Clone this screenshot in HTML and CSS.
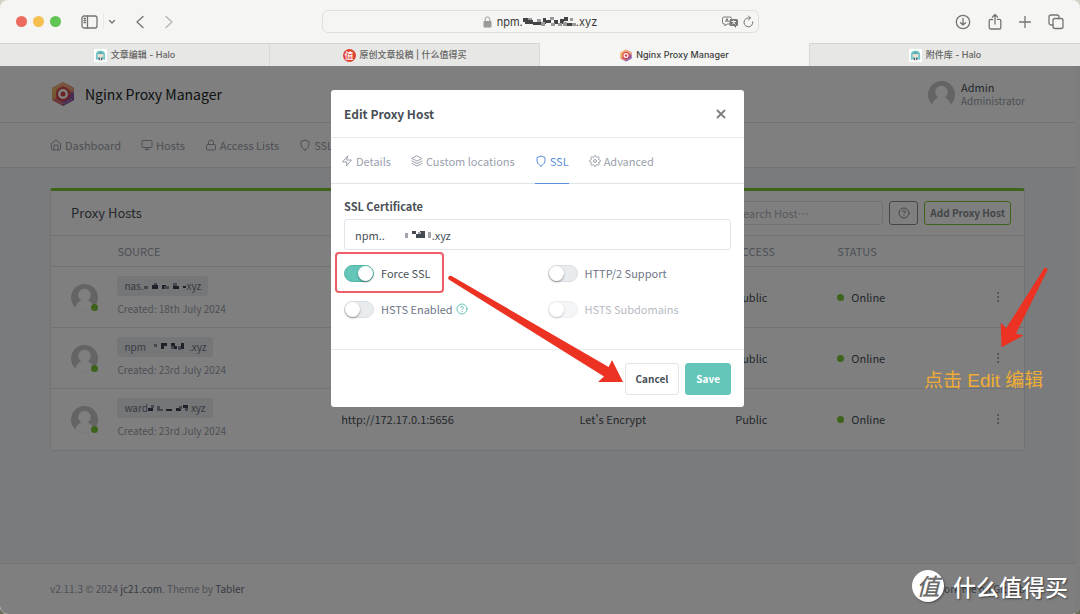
FILE: index.html
```html
<!DOCTYPE html>
<html lang="zh-CN">
<head>
<meta charset="utf-8">
<title>Nginx Proxy Manager</title>
<link rel="stylesheet" href="styles.css">
</head>
<body>
<svg class="defs" width="0" height="0" aria-hidden="true">
  <defs>
    <linearGradient id="npm" x1="0" y1="0" x2="1" y2="1">
      <stop offset="0" stop-color="#f5b955"/><stop offset=".45" stop-color="#e0605c"/><stop offset="1" stop-color="#7a54a8"/>
    </linearGradient>
    <symbol id="logo" viewBox="0 0 24 26">
      <path d="M12 1 23 7v12l-11 6L1 19V7z" fill="url(#npm)"/>
      <path d="M12 1 23 7v6L12 5 1 12V7z" fill="#f0b070" opacity=".7"/>
      <path d="M23 10v9l-11 6v-4z" fill="#7b52b5" opacity=".6"/>
      <path d="M1 7l4 2v8l-4 2z" fill="#f2d070" opacity=".6"/>
      <path d="M3 8l9-5 9 5M3 18l9 5 9-5" fill="none" stroke="#fff" stroke-width=".7" opacity=".5"/>
      <circle cx="12" cy="13" r="7" fill="#d8434a"/>
      <circle cx="12" cy="13" r="5" fill="#fff"/>
      <circle cx="12" cy="13" r="2.500" fill="#d8434a"/>
    </symbol>
    <symbol id="girl" viewBox="0 0 14 14">
      <rect width="14" height="14" fill="#fff"/>
      <path d="M2 12V6a5 4.500 0 0 1 10 0v6l-2-1H4z" fill="#79c9cb"/>
      <rect x="4" y="5" width="6" height="4" rx="1.500" fill="#f2ddd0"/>
      <path d="M3.500 5.500 5 3.500h4l1.500 2-2-.6-1.500.8-1.500-.8z" fill="#4fa3a8"/>
      <path d="M5 9.500h4v2.500H5z" fill="#54636a"/><path d="M6.500 9h1v3h-1z" fill="#e8e8e8"/>
    </symbol>
    <symbol id="user" viewBox="0 0 28 28">
      <circle cx="14" cy="14" r="14" fill="#c8c8c8"/>
      <circle cx="14" cy="11.500" r="6.500" fill="#fff"/>
      <path d="M4.500 24.300C6 19 9.500 16.500 14 16.500s8 2.500 9.500 7.800A14 14 0 0 1 14 28a14 14 0 0 1-9.500-3.700z" fill="#fff"/>
    </symbol>
    <symbol id="shield" viewBox="0 0 24 24"><path d="M12 22s8-4 8-10V5l-8-3-8 3v7c0 6 8 10 8 10z"/></symbol>
    <symbol id="help" viewBox="0 0 24 24"><circle cx="12" cy="12" r="10"/><path d="M9.090 9a3 3 0 0 1 5.830 1c0 2-3 3-3 3M12 17h.01"/></symbol>
    <symbol id="dots" viewBox="0 0 24 24"><circle cx="12" cy="12" r="1"/><circle cx="12" cy="4" r="1"/><circle cx="12" cy="20" r="1"/></symbol>
  </defs>
</svg>

<div class="window">
  <header class="toolbar">
    <div class="tools-left">
      <div class="lights"><i class="red"></i><i class="yellow"></i><i class="green"></i></div>
      <button class="tool" aria-label="Sidebar"><svg width="17" height="14" viewBox="0 0 17 14" class="line"><rect x="1" y="1" width="15" height="12" rx="2"/><path d="M6.500 1v12M3 3.500h1.500M3 5.500h1.500M3 7.500h1.500"/></svg></button>
      <button class="tool small" aria-label="Tab groups"><svg width="8" height="6" viewBox="0 0 8 6" class="line"><path d="m1.500 1.500 2.500 2.500 2.500-2.500"/></svg></button>
      <button class="tool back" aria-label="Back"><svg width="10" height="14" viewBox="0 0 10 14" class="line"><path d="M8 1.500 2 7l6 5.500"/></svg></button>
      <button class="tool forward" aria-label="Forward"><svg width="10" height="14" viewBox="0 0 10 14" class="line"><path d="m2 1.500 6 5.500-6 5.500"/></svg></button>
    </div>
    <div class="address">
      <div class="url">
        <svg width="9" height="12" viewBox="0 0 9 12"><rect x="0.500" y="5" width="8" height="6.500" rx="1" fill="#9a9a99"/><path d="M2.200 5V3.200a2.300 2.300 0 0 1 4.600 0V5" fill="none" stroke="#9a9a99"/></svg>
        <span class="host">npm.<svg width="53" height="10" viewBox="0 0 53 10"><path d="M0 1h5v4H0zM2 3h8v4H2zM10 5h12v3H10zM20 1h3v6h-3zM23 3h5v3h-5zM31 3h4v4h-4zM37 2h4v5h-4zM41 0h4v4h-4zM44 6h5v3h-5z" fill="#444"/><path d="M5 1h4v2H5zM14 2h4v3h-4zM18 5h4v4h-4zM27 0h4v3h-4zM28 6h4v3h-4zM35 6h4v3h-4zM40 5h4v4h-4zM47 1h3v3h-3zM49 6h4v3h-4z" fill="#999"/></svg>.xyz</span>
      </div>
      <div class="url-tools">
        <svg width="17" height="12" viewBox="0 0 17 12"><path d="M2 1h6a1.500 1.500 0 0 1 1.500 1.500v4A1.500 1.500 0 0 1 8 8H5L3 10V8H2A1.500 1.500 0 0 1 .5 6.500v-4A1.500 1.500 0 0 1 2 1zM3.500 6 5 2.500 6.500 6M4 5h2" fill="none" stroke="#7b7b7a"/><path d="M9 3h5.500A1.500 1.500 0 0 1 16 4.500v4a1.500 1.500 0 0 1-1.500 1.500H14v2l-2-2H9a1.500 1.500 0 0 1-1.500-1.500v-4A1.500 1.500 0 0 1 9 3z" fill="#777776"/><path d="M9.500 5.500h4.500M11.700 4.300v1.200M10 8.500l3-3M13.500 8.500l-3-3" fill="none" stroke="#eee"/></svg>
        <svg width="11" height="13" viewBox="0 0 11 13" class="line thin"><path d="M9.800 6.800A4.400 4.400 0 1 1 5.500 3h1.800M5.500 1l2 2-2 2"/></svg>
      </div>
    </div>
    <div class="tools-right">
      <button class="tool" aria-label="Downloads"><svg width="16" height="16" viewBox="0 0 16 16" class="line"><circle cx="8" cy="8" r="6.700"/><path d="M8 4.500V11M5.500 8.700 8 11l2.500-2.300"/></svg></button>
      <button class="tool" aria-label="Share"><svg width="14" height="18" viewBox="0 0 14 18" class="line"><path d="M4.500 6.500h-2a1.300 1.300 0 0 0-1.300 1.300v7A1.300 1.300 0 0 0 2.500 16h9a1.300 1.300 0 0 0 1.300-1.300v-7a1.300 1.300 0 0 0-1.300-1.300h-2M7 11V1.500M4.500 4 7 1.500 9.500 4"/></svg></button>
      <button class="tool" aria-label="New tab"><svg width="12" height="12" viewBox="0 0 12 12" class="line"><path d="M6 .5v11M.5 6h11"/></svg></button>
      <button class="tool" aria-label="Tab overview"><svg width="16" height="16" viewBox="0 0 16 16" class="line"><rect x="5" y="4.500" width="10" height="10" rx="2"/><path d="M5 11H3a2 2 0 0 1-2-2V3a2 2 0 0 1 2-2h6a2 2 0 0 1 2 2v1.500"/></svg></button>
    </div>
  </header>

  <nav class="tabs">
    <a class="tab" href="#"><svg width="13" height="13"><use href="#girl"/></svg>文章编辑 - Halo</a>
    <a class="tab" href="#"><span class="zhi">值</span>原创文章投稿 | 什么值得买</a>
    <a class="tab current" href="#"><svg width="12" height="13"><use href="#logo"/></svg>Nginx Proxy Manager</a>
    <a class="tab" href="#"><svg width="13" height="13"><use href="#girl"/></svg>附件库 - Halo</a>
  </nav>

  <div class="viewport">
    <div class="page">
      <header class="site-header">
        <a class="brand" href="#"><svg width="26" height="26"><use href="#logo"/></svg>Nginx Proxy Manager</a>
        <div class="account">
          <svg width="27" height="27"><use href="#user"/></svg>
          <div><div class="name">Admin</div><div class="role">Administrator</div></div>
        </div>
      </header>
      <nav class="site-nav">
        <a href="#"><svg class="fe" viewBox="0 0 24 24"><path d="m3 9 9-7 9 7v11a2 2 0 0 1-2 2H5a2 2 0 0 1-2-2z"/><path d="M8 22V12h8v10"/></svg>Dashboard</a>
        <a href="#"><svg class="fe" viewBox="0 0 24 24"><rect x="2" y="3" width="20" height="14" rx="2"/><path d="M8 21h8M12 17v4"/></svg>Hosts</a>
        <a href="#"><svg class="fe" viewBox="0 0 24 24"><rect x="3" y="11" width="18" height="11" rx="2"/><path d="M7 11V7a5 5 0 0 1 10 0v4"/></svg>Access Lists</a>
        <a href="#"><svg class="fe"><use href="#shield"/></svg>SSL Certificates</a>
      </nav>

      <main class="content">
        <section class="card">
          <div class="card-header">
            <h1>Proxy Hosts</h1>
            <div class="card-tools">
              <input type="text" class="search" placeholder="Search Host…" aria-label="Search Host">
              <button class="help-btn" aria-label="Help"><svg class="fe"><use href="#help"/></svg></button>
              <button class="add-btn">Add Proxy Host</button>
            </div>
          </div>
          <table>
            <colgroup><col class="c-icon"><col class="c-source"><col class="c-dest"><col class="c-ssl"><col class="c-access"><col class="c-status"><col class="c-menu"></colgroup>
            <thead><tr><th></th><th>Source</th><th>Destination</th><th>SSL</th><th>Access</th><th>Status</th><th></th></tr></thead>
            <tbody>
              <tr>
                <td><span class="avatar"><svg width="27" height="27"><use href="#user"/></svg></span></td>
                <td><span class="tag">nas.<svg width="43" height="8" viewBox="0 0 43 8"><path d="M8 3h6v4H8zM18 3h4v4h-4zM29 4h6v3h-6zM39 4h3v2h-3z" fill="#3d4250"/><path d="M0 4h4v3H0zM10 1h3v2h-3zM20 4h5v3h-5zM29 1h4v3h-4z" fill="#8a90a0"/></svg>xyz</span><div class="created">Created: 18th July 2024</div></td>
                <td></td><td></td><td>Public</td><td><span class="online">Online</span></td>
                <td><button class="more" aria-label="Actions"><svg class="fe"><use href="#dots"/></svg></button></td>
              </tr>
              <tr>
                <td><span class="avatar"><svg width="27" height="27"><use href="#user"/></svg></span></td>
                <td><span class="tag">npm<svg width="43" height="8" viewBox="0 0 43 8"><path d="M15 0h6v3h-6zM15 3h3v3h-3zM25 0h4v3h-4zM28 3h3v3h-3zM35 0h3v6h-3z" fill="#3d4250"/><path d="M8 1h3v3H8zM25 3h3v3h-3zM32 3h3v4h-3z" fill="#8a90a0"/></svg>.xyz</span><div class="created">Created: 23rd July 2024</div></td>
                <td></td><td></td><td>Public</td><td><span class="online">Online</span></td>
                <td><button class="more" aria-label="Actions"><svg class="fe"><use href="#dots"/></svg></button></td>
              </tr>
              <tr>
                <td><span class="avatar"><svg width="27" height="27"><use href="#user"/></svg></span></td>
                <td><span class="tag">ward<svg width="43" height="8" viewBox="0 0 43 8"><path d="M0 4h5v3H0zM18 5h6v2h-6zM28 4h5v3h-5zM35 1h5v3h-5z" fill="#3d4250"/><path d="M3 1h3v3H3zM9 2h3v5H9zM12 5h3v2h-3zM31 2h3v3h-3zM37 4h3v3h-3z" fill="#8a90a0"/></svg>xyz</span><div class="created">Created: 23rd July 2024</div></td>
                <td>http://172.17.0.1:5656</td><td>Let's Encrypt</td><td>Public</td><td><span class="online">Online</span></td>
                <td><button class="more" aria-label="Actions"><svg class="fe"><use href="#dots"/></svg></button></td>
              </tr>
            </tbody>
          </table>
        </section>
      </main>

      <footer class="site-footer">
        <div>v2.11.3 © 2024 <a href="#">jc21.com</a>. Theme by <a href="#">Tabler</a></div>
        <a href="#">Fork me on Github</a>
      </footer>
    </div>

    <div class="backdrop">
      <section class="modal" role="dialog" aria-labelledby="dlg">
        <header class="modal-header">
          <h2 id="dlg">Edit Proxy Host</h2>
          <button class="close" aria-label="Close"><svg width="10" height="10" viewBox="0 0 10 10"><path d="m1 1 8 8M9 1 1 9" stroke="#7d7d7d" stroke-width="1.800"/></svg></button>
        </header>
        <nav class="modal-tabs">
          <a href="#"><svg class="fe" viewBox="0 0 24 24"><path d="M13 2 3 14h9l-1 8 10-12h-9z"/></svg>Details</a>
          <a href="#"><svg class="fe" viewBox="0 0 24 24"><path d="m12 2 10 5-10 5L2 7zM2 17l10 5 10-5M2 12l10 5 10-5"/></svg>Custom locations</a>
          <a href="#" class="active"><svg class="fe"><use href="#shield"/></svg>SSL</a>
          <a href="#"><svg class="fe" viewBox="0 0 24 24"><circle cx="12" cy="12" r="3"/><path d="M19.400 15a1.650 1.650 0 0 0 .33 1.820l.06.06a2 2 0 1 1-2.830 2.830l-.06-.06a1.650 1.650 0 0 0-2.800 1.170V21a2 2 0 0 1-4 0v-.09A1.650 1.650 0 0 0 7.180 19.700l-.06.06a2 2 0 1 1-2.830-2.830l.06-.06A1.650 1.650 0 0 0 3.090 14H3a2 2 0 0 1 0-4h.09A1.650 1.650 0 0 0 4.300 7.180l-.06-.06a2 2 0 1 1 2.830-2.830l.06.06A1.650 1.650 0 0 0 10 3.090V3a2 2 0 0 1 4 0v.09a1.650 1.650 0 0 0 2.820 1.210l.06-.06a2 2 0 1 1 2.830 2.830l-.06.06A1.650 1.650 0 0 0 20.910 10H21a2 2 0 0 1 0 4h-.09a1.650 1.650 0 0 0-1.510 1z"/></svg>Advanced</a>
        </nav>
        <div class="modal-body">
          <label class="field-label" for="cert">SSL Certificate</label>
          <div class="select-wrap">
            <select id="cert"><option>npm..&nbsp;&nbsp;&nbsp;&nbsp;&nbsp;&nbsp;&nbsp;&nbsp;&nbsp;&nbsp;&nbsp;&nbsp;&nbsp;&nbsp;&nbsp;&nbsp;&nbsp;&nbsp;&nbsp;.xyz</option></select>
            <svg class="mosaic" width="28" height="8" viewBox="0 0 28 8"><path d="M7 0h4v3H7zM11 3h4v4h-4zM15 0h5v7h-5z" fill="#444b52"/><path d="M0 2h3v5H0zM13 1h3v2h-3zM23 1h3v6h-3z" fill="#a3a7ac"/></svg>
          </div>
          <div class="switches">
            <label class="switch on"><input type="checkbox" checked>Force SSL</label>
            <label class="switch"><input type="checkbox">HTTP/2 Support</label>
            <label class="switch"><input type="checkbox">HSTS Enabled<svg class="fe hint"><use href="#help"/></svg></label>
            <label class="switch off"><input type="checkbox" disabled>HSTS Subdomains</label>
          </div>
        </div>
        <footer class="modal-footer">
          <button class="btn">Cancel</button>
          <button class="btn primary">Save</button>
        </footer>
      </section>
    </div>
  </div>

  <div class="mark-box"></div>
  <svg class="arrows" width="1080" height="614" viewBox="0 0 1080 614" fill="#ec3323" aria-hidden="true">
    <path d="M451.500 276 608.700 367 612 360 623 382H598l6-5.500L449.500 280a2.200 2.200 0 0 1 2-4z"/>
    <path d="M1044 268.500 1006.300 328 1000.700 322.700 1001.500 347.300 1023.500 335.500 1016 333.500 1047.500 270a2 2 0 0 0-3.500-1.500z"/>
  </svg>
  <div class="note">点击 Edit 编辑</div>
  <div class="watermark"><span class="seal">值</span>什么值得买</div>
</div>
</body>
</html>
```

FILE: styles.css
```css
* { box-sizing: border-box; }

body {
  margin: 0;
  background: linear-gradient(#d5d0c6, #a2a2a0 60%, #6b6f58);
  color: #495057;
  font: 11px/20px "Noto Sans CJK SC", sans-serif;
}

a { color: inherit; text-decoration: none; }
button, input, select { font: inherit; color: inherit; }
button { border: 0; padding: 0; background: none; }
svg { display: block; flex: none; }

.defs { position: absolute; }

.line { fill: none; stroke: #747473; stroke-width: 1.3; stroke-linecap: round; stroke-linejoin: round; }
.thin { stroke-width: 1; }

.fe {
  width: 12px;
  height: 12px;
  fill: none;
  stroke: currentColor;
  stroke-width: 2;
  stroke-linecap: round;
  stroke-linejoin: round;
}

.window {
  position: relative;
  display: flex;
  flex-direction: column;
  min-height: 100vh;
  border-radius: 8px;
  overflow: hidden;
}

/* browser chrome */
.toolbar {
  display: grid;
  grid-template-columns: 1fr minmax(0, 437px) 1fr;
  align-items: center;
  height: 43px;
  background: #f5f5f3;
  font-family: Inter, "Noto Sans CJK SC", sans-serif;
}
.tools-left, .tools-right, .lights, .url, .url-tools { display: flex; align-items: center; }
.tools-left { padding-left: 16px; }
.lights { gap: 6px; margin-right: 20px; }
.lights i { width: 11px; height: 11px; border-radius: 50%; }
.red { background: #ed6a5e; }
.yellow { background: #f4bf4f; }
.green { background: #61c554; }
.small { margin-left: 5px; padding-left: 4px; border-left: 1px solid #e8e8e6; height: 15px; }
.back { margin-left: 19px; }
.forward { margin-left: 19px; opacity: .5; }
.tools-right { justify-content: flex-end; gap: 17px; padding-right: 16px; }

.address {
  display: grid;
  grid-template-columns: 1fr auto 1fr;
  align-items: center;
  height: 23px;
  border: 1px solid #dfdfdd;
  border-radius: 6px;
  color: #3c3c3b;
  font-size: 11px;
}
.url { grid-column: 2; gap: 5px; }
.host { display: flex; align-items: center; }
.url-tools { justify-self: end; gap: 4px; padding-right: 4px; }

.tabs {
  display: grid;
  grid-template-columns: repeat(4, 1fr);
  height: 23px;
  background: #e7e7e5;
  color: #646463;
  font: 500 9px/22px Inter, "Noto Sans CJK SC", sans-serif;
}
.tab {
  display: flex;
  align-items: center;
  justify-content: center;
  gap: 4px;
  border-top: 1px solid #d4d4d2;
  border-right: 1px solid #d8d8d6;
}
.tab:last-child { border-right: 0; }
.tab.current { background: #f5f5f3; border-top-color: #f5f5f3; color: #3c3c3b; }
.zhi {
  width: 13px;
  height: 13px;
  border-radius: 50%;
  background: #e0402f;
  color: #fff;
  font-size: 9px;
  line-height: 13px;
  text-align: center;
}

/* site */
.viewport {
  position: relative;
  flex: 1;
  display: flex;
  background: #fafafa;
  padding-right: 5px;
}
.page { flex: 1; display: flex; flex-direction: column; background: #f5f7fb; }

.site-header {
  display: flex;
  align-items: center;
  justify-content: space-between;
  height: 57px;
  padding: 0 50px;
  background: #fff;
  border-bottom: 1px solid #e0e5ec;
}
.brand { display: flex; align-items: center; gap: 9px; color: #212529; font-size: 14px; }
.account { display: flex; align-items: center; gap: 6px; line-height: 14px; }
.role { color: #9aa0ac; font-size: 10px; }

.site-nav {
  display: flex;
  align-items: center;
  gap: 20px;
  height: 45px;
  padding: 0 50px;
  background: #fff;
  border-bottom: 1px solid #e0e5ec;
  color: #9aa0ac;
}
.site-nav a { display: flex; align-items: center; gap: 3px; }

.content { flex: 1; padding: 20px 50px; }
.card {
  background: #fff;
  border: 1px solid #e0e5ec;
  border-top: 3px solid #7bc834;
  border-radius: 3px;
}
.card-header {
  display: flex;
  align-items: center;
  justify-content: space-between;
  height: 44px;
  padding: 0 13px 0 20px;
}
h1, h2 { margin: 0; font-weight: 400; }
h1 { font-size: 13px; }
.card-tools { display: flex; gap: 6px; }
.search {
  width: 158px;
  height: 24px;
  padding: 0 10px;
  border: 1px solid #e0e5ec;
  border-radius: 3px;
  background: none;
}
.search::placeholder { color: #adb5bd; opacity: 1; }
.help-btn, .add-btn {
  display: flex;
  align-items: center;
  justify-content: center;
  height: 24px;
  border: 1px solid #868e96;
  border-radius: 3px;
  color: #868e96;
}
.help-btn { width: 29px; }
.add-btn { padding: 0 5px; border-color: #7bc834; font-size: 10px; font-weight: 700; }

table { width: 100%; table-layout: fixed; border-collapse: collapse; }
.c-icon { width: 6%; }
.c-source { width: 23%; }
.c-dest { width: 24.500%; }
.c-ssl { width: 16%; }
.c-access { width: 10.500%; }
.c-menu { width: 9%; }
th, td { padding: 0 8px; border-top: 1px solid #e0e5ec; text-align: left; }
th { height: 31px; color: #9aa0ac; font-weight: 400; text-transform: uppercase; }
td { height: 61px; }
td:first-child { padding-left: 20px; }
td:last-child { padding-right: 20px; }
.avatar { position: relative; display: block; width: 27px; }
.avatar::after {
  content: "";
  position: absolute;
  right: 0;
  bottom: 0;
  width: 7px;
  height: 7px;
  border-radius: 50%;
  background: #7bc834;
}
.tag {
  display: inline-flex;
  align-items: center;
  height: 20px;
  padding: 0 7px;
  border-radius: 3px;
  background: #e9ecef;
  color: #6e7687;
  font-size: 10px;
  line-height: 20px;
  vertical-align: top;
}
.created { margin-top: 3px; color: #9aa0ac; font-size: 10px; }
.online { display: flex; align-items: center; gap: 7px; }
.online::before { content: ""; width: 7px; height: 7px; border-radius: 50%; background: #7bc834; }
.more { display: block; margin-left: auto; color: #868e96; }

.site-footer {
  display: flex;
  align-items: center;
  justify-content: space-between;
  height: 51px;
  padding: 0 50px;
  border-top: 1px solid #e0e5ec;
  background: #fff;
  color: #9aa0ac;
  font-size: 10px;
}
.site-footer a { color: #6e7687; }

/* dialog */
.backdrop {
  position: absolute;
  inset: 0;
  padding: 24px 5px 0 0;
  background: rgba(0, 0, 0, .5);
}
.modal {
  max-width: 413px;
  margin: 0 auto;
  border-radius: 3px;
  background: #fff;
}
.modal-header {
  display: flex;
  align-items: center;
  justify-content: space-between;
  height: 48px;
  padding: 0 18px 0 13px;
  border-bottom: 1px solid #e9ecef;
}
.modal-header h2 { font-size: 12px; font-weight: 700; }
.modal-tabs {
  display: flex;
  gap: 20px;
  height: 46px;
  padding: 0 10px;
  border-bottom: 1px solid #e0e5ec;
  color: #9aa0ac;
}
.modal-tabs a { display: flex; align-items: center; gap: 3px; height: 46px; border-bottom: 1px solid transparent; }
.modal-tabs .active { color: #5b8fd9; border-color: #5b8fd9; }
.modal-body { padding: 12px 13px 30px; }
.field-label { display: block; height: 23px; font-weight: 700; }
.select-wrap { position: relative; }
select {
  display: block;
  width: 100%;
  height: 31px;
  padding: 0 10px;
  border: 1px solid #e0e5ec;
  border-radius: 3px;
  background: #fff;
  appearance: none;
}
.mosaic { position: absolute; left: 61px; top: 12px; }
.switches { display: grid; grid-template-columns: 1fr 1fr; gap: 16px 20px; margin-top: 13px; }
.switch { display: flex; align-items: center; gap: 7px; color: #6e7687; }
.switch input {
  appearance: none;
  width: 30px;
  height: 17px;
  margin: 0;
  padding: 1px;
  border: 1px solid #dadde2;
  border-radius: 9px;
  background: #e9ecef;
}
.switch input::before {
  content: "";
  display: block;
  width: 15px;
  height: 15px;
  margin: -1px;
  border-radius: 50%;
  background: #fff;
  box-shadow: 0 1px 2px rgba(0, 0, 0, .4);
}
.switch input:checked { background: #63c6b9; border-color: #55b5a8; }
.switch input:checked::before { margin-left: 12px; }
.on { color: #495057; }
.off { opacity: .5; }
.hint { margin-left: -4px; color: #63c6b9; }
.modal-footer {
  display: flex;
  align-items: center;
  justify-content: flex-end;
  gap: 6px;
  height: 58px;
  padding: 0 13px;
  border-top: 1px solid #e9ecef;
}
.btn {
  height: 32px;
  padding: 0 10px;
  border: 1px solid #e0e5ec;
  border-radius: 3px;
  font-size: 10px;
  font-weight: 700;
}
.primary { background: #63c6b9; border-color: #63c6b9; color: #fff; }

/* annotations */
.mark-box {
  position: absolute;
  left: 335px;
  top: 252px;
  width: 109px;
  height: 41px;
  border: 2px solid #ee5f67;
  border-radius: 4px;
}
.arrows { position: absolute; left: 0; top: 0; }
.note {
  position: absolute;
  left: 924px;
  top: 369px;
  color: #f0ad35;
  font: 19px/24px "Liberation Sans", "Noto Sans CJK SC", sans-serif;
}
.watermark {
  position: absolute;
  right: 12px;
  bottom: 12px;
  display: flex;
  align-items: center;
  gap: 9px;
  color: #fff;
  font-size: 23px;
  font-weight: 500;
  line-height: 30px;
  text-shadow: 1px 1px 2px rgba(0, 0, 0, .5);
}
.seal {
  width: 32px;
  height: 32px;
  border-radius: 50%;
  background: #fff;
  box-shadow: 1px 1px 2px rgba(0, 0, 0, .4);
  color: #6b6b6b;
  font-style: italic;
  text-align: center;
  text-shadow: none;
}
```
